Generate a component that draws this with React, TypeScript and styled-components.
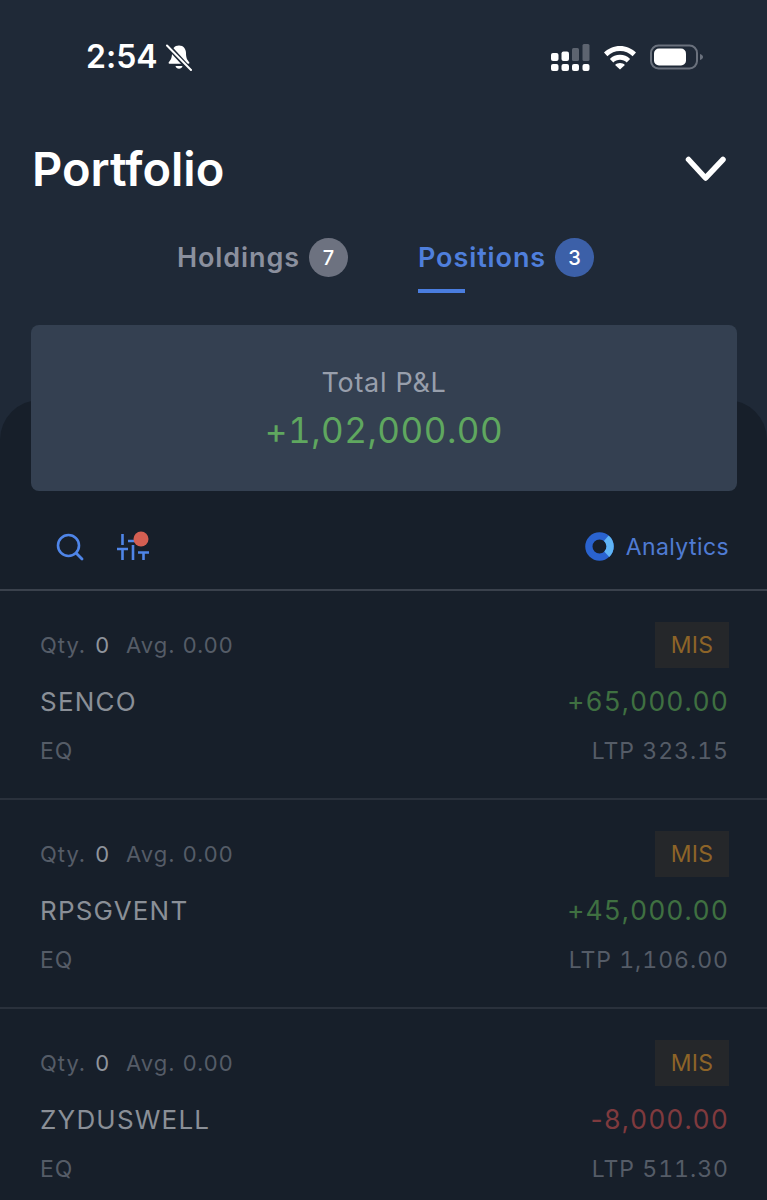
import React from "react";
import styled, { createGlobalStyle } from "styled-components";

const Global = createGlobalStyle`
  html, body { margin: 0; padding: 0; background: #171f2a; }
  body { font-family: Inter, "Liberation Sans", sans-serif; -webkit-font-smoothing: antialiased; font-variant-ligatures: none; font-feature-settings: "calt" 0, "liga" 0; }
`;

const Page = styled.div`
  width: 767px;
  height: 1200px;
  overflow: hidden;
  background: #1f2937;
  display: flow-root;
`;

const StatusBar = styled.div`
  height: 48px;
  padding: 33px 63px 0 86px;
  display: flex;
  justify-content: space-between;
  align-items: center;
`;
const StatusLeft = styled.div`
  display: flex;
  align-items: center;
  gap: 7px;
`;
const Time = styled.span`
  color: #fff;
  font-size: 32px;
  font-weight: 600;
  line-height: 38px;
`;
const StatusRight = styled.div`
  display: flex;
  align-items: center;
  gap: 13px;
`;

const TitleRow = styled.div`
  margin-top: 56px;
  height: 64px;
  padding: 0 40px 0 32px;
  display: flex;
  justify-content: space-between;
  align-items: center;
`;
const Title = styled.h1`
  margin: 0;
  color: #fff;
  font-size: 47px;
  font-weight: 600;
  line-height: 64px;
`;

const Tabs = styled.div`
  margin-top: 37px;
  padding-left: 177px;
  display: flex;
  gap: 70px;
`;
const Tab = styled.div`
  height: 64px;
  display: flex;
  flex-direction: column;
  align-items: flex-start;
`;
const TabHead = styled.div`
  height: 39px;
  display: flex;
  align-items: center;
  gap: 9px;
`;
const TabLabel = styled.span<{ $active?: boolean }>`
  font-size: 27px;
  font-weight: 600;
  letter-spacing: 0.9px;
  color: ${(p) => (p.$active ? "#4f7fdc" : "#8b909e")};
`;
const Count = styled.span<{ $active?: boolean }>`
  width: 39px;
  height: 39px;
  border-radius: 50%;
  display: flex;
  align-items: center;
  justify-content: center;
  color: #fff;
  font-size: 20px;
  font-weight: 500;
  background: ${(p) => (p.$active ? "#3c60a8" : "#6d7280")};
`;
const Underline = styled.div`
  width: 47px;
  height: 4px;
  margin-top: 12px;
  background: #4a7ddf;
`;

const Card = styled.div`
  position: relative;
  z-index: 1;
  margin: 23px 30px 0 31px;
  height: 166px;
  border-radius: 8px;
  background: #344051;
  display: flex;
  flex-direction: column;
  align-items: center;
`;
const CardLabel = styled.div`
  margin-top: 42px;
  color: #989fac;
  font-size: 27px;
  line-height: 32px;
  letter-spacing: 0.7px;
`;
const CardValue = styled.div`
  margin-top: 10px;
  color: #5fa75f;
  font-size: 35px;
  line-height: 42px;
  letter-spacing: 0.5px;
  font-variant-numeric: tabular-nums;
`;

const Sheet = styled.div`
  height: 800px;
  margin-top: -91px;
  padding-top: 91px;
  background: #171f2a;
  border-radius: 40px 40px 0 0;
`;

const Toolbar = styled.div`
  height: 100px;
  padding: 13px 38px 0 56px;
  display: flex;
  align-items: center;
  justify-content: space-between;
  border-bottom: 2px solid #3a414c;
  box-sizing: border-box;
`;
const ToolIcons = styled.div`
  display: flex;
  align-items: center;
  gap: 33px;
`;
const AnalyticsLink = styled.div`
  display: flex;
  align-items: center;
  gap: 12px;
  color: #4f7bd3;
  font-size: 23px;
  letter-spacing: 0.4px;
`;

const Row = styled.div`
  height: 209px;
  box-sizing: border-box;
  padding: 31px 38px 0 40px;
  border-bottom: 2px solid #2a313c;
  display: flex;
  flex-direction: column;
`;
const Line = styled.div<{ $h: number; $mt?: number }>`
  height: ${(p) => p.$h}px;
  margin-top: ${(p) => p.$mt ?? 0}px;
  display: flex;
  align-items: center;
  justify-content: space-between;
`;
const Meta = styled.div`
  display: flex;
  align-items: center;
  gap: 16px;
  color: #555c67;
  font-size: 22px;
  letter-spacing: 1px;
`;
const MetaItem = styled.span`
  display: flex;
  align-items: center;
  gap: 9px;
`;
const Qty = styled.b`
  font-weight: 400;
  color: #8f949c;
`;
const Badge = styled.span`
  width: 74px;
  height: 46px;
  display: flex;
  align-items: center;
  justify-content: center;
  background: #25272a;
  color: #8d6428;
  font-size: 23px;
  letter-spacing: 0.3px;
`;
const Symbol = styled.span`
  color: #8a8f97;
  font-size: 26px;
  letter-spacing: 1.2px;
`;
const Pnl = styled.span<{ $neg?: boolean }>`
  color: ${(p) => (p.$neg ? "#7f3a3e" : "#3f7041")};
  font-size: 26.5px;
  letter-spacing: 1px;
  font-variant-numeric: tabular-nums;
`;
const Sign = styled.span`
  font-variant-numeric: normal;
`;
const Small = styled.span`
  color: #555c67;
  font-size: 23px;
  letter-spacing: 1px;
  font-variant-numeric: tabular-nums;
`;

const BellOff = () => (
  <svg width="28" height="28" viewBox="0 0 28 28" fill="none">
    <path d="M14 2.5c-4.6 0-7 3.6-7 7.6 0 4.8-1 6.6-3.2 9.2-.5.6-.1 1.4.6 1.4h19.2c.7 0 1.1-.8.6-1.4-2.2-2.6-3.2-4.4-3.2-9.2 0-4-2.4-7.6-7-7.6z" fill="#fff" />
    <path d="M10.5 23h7c-.4 1.7-1.8 2.7-3.5 2.7s-3.1-1-3.5-2.7z" fill="#fff" />
    <path d="M3 3l22 24" stroke="#1f2937" strokeWidth="5" />
    <path d="M2 2.5l24 24.5" stroke="#fff" strokeWidth="2" strokeLinecap="round" />
  </svg>
);

const Cellular = () => (
  <svg width="39" height="30" viewBox="0 0 39 30">
    <g fill="#fff">
      <rect x="0" y="11" width="7.5" height="8" rx="2" />
      <rect x="10.5" y="9.5" width="7.5" height="9.5" rx="2" />
      <rect x="0" y="22" width="7.5" height="7" rx="2" />
      <rect x="10.5" y="22" width="7.5" height="7" rx="2" />
      <rect x="21" y="22" width="7" height="7" rx="2" />
      <rect x="31.5" y="22" width="7" height="7" rx="2" />
    </g>
    <rect x="21" y="6" width="7" height="13" rx="1.5" fill="#5d6470" />
    <rect x="31.5" y="2" width="7" height="17" rx="1.5" fill="#5d6470" />
  </svg>
);

const Wifi = () => (
  <svg width="34" height="26" viewBox="0 0 34 26">
    <path d="M17 2C10.8 2 5.4 4.4 1 8.6l3.4 3.6C7.8 8.9 12.2 7 17 7s9.2 1.9 12.6 5.2L33 8.6C28.6 4.4 23.2 2 17 2z" fill="#fff" />
    <path d="M17 10.8c-3.9 0-7.4 1.5-10.1 4.1l3.4 3.5c1.8-1.7 4.1-2.7 6.7-2.7s4.9 1 6.7 2.7l3.4-3.5C24.4 12.3 20.9 10.8 17 10.8z" fill="#fff" />
    <path d="M17 19c-1.9 0-3.6.7-4.9 1.9L17 25.5l4.9-4.6C20.6 19.7 18.9 19 17 19z" fill="#fff" />
  </svg>
);

const Battery = () => (
  <svg width="54" height="26" viewBox="0 0 54 26">
    <rect x="1" y="1.5" width="46" height="23" rx="7.5" fill="none" stroke="#6a717d" strokeWidth="2" />
    <rect x="4" y="4.5" width="32" height="17" rx="5" fill="#fff" />
    <path d="M50 10c1.8.5 3 1.6 3 3s-1.2 2.5-3 3z" fill="#6a717d" />
  </svg>
);

const Chevron = () => (
  <svg width="42" height="28" viewBox="0 0 42 28" fill="none">
    <path d="M3.5 4.5L20.500 23L38 4.500" stroke="#fff" strokeWidth="5.500" strokeLinecap="round" strokeLinejoin="round" />
  </svg>
);

const SearchIcon = () => (
  <svg width="28" height="28" viewBox="0 0 28 28" fill="none">
    <circle cx="12.5" cy="12.5" r="10.5" stroke="#4f85e8" strokeWidth="2.6" />
    <path d="M20.5 20.5l5.5 5.5" stroke="#4f85e8" strokeWidth="2.8" strokeLinecap="round" />
  </svg>
);

const FilterIcon = () => (
  <svg width="33" height="32" viewBox="0 0 33 32" fill="none">
    <g stroke="#4f85e8" strokeWidth="2.6">
      <path d="M5.5 3v11M5.500 18v11M16 14v15M26.500 22v7" />
      <path d="M0 18h11M11 10h10M21 21.500h11" />
    </g>
    <circle cx="24" cy="8" r="7.500" fill="#d45f52" />
  </svg>
);

const AnalyticsIcon = () => (
  <svg width="29" height="29" viewBox="0 0 30 30" fill="none">
    <circle cx="15" cy="15" r="11" stroke="#2a63cf" strokeWidth="7.500" />
    <path d="M22 6.500A11 11 0 0 1 22.500 23" stroke="#5fb4f5" strokeWidth="7.500" />
  </svg>
);

const rows = [
  { name: "SENCO", pnl: "+65,000.00", ltp: "LTP 323.15" },
  { name: "RPSGVENT", pnl: "+45,000.00", ltp: "LTP 1,106.00" },
  { name: "ZYDUSWELL", pnl: "-8,000.00", ltp: "LTP 511.30", neg: true },
];

export default function App() {
  return (
    <Page>
      <Global />
      <StatusBar>
        <StatusLeft>
          <Time>2:54</Time>
          <BellOff />
        </StatusLeft>
        <StatusRight>
          <Cellular />
          <Wifi />
          <Battery />
        </StatusRight>
      </StatusBar>
      <TitleRow>
        <Title>Portfolio</Title>
        <Chevron />
      </TitleRow>
      <Tabs>
        <Tab>
          <TabHead>
            <TabLabel>Holdings</TabLabel>
            <Count>7</Count>
          </TabHead>
        </Tab>
        <Tab>
          <TabHead>
            <TabLabel $active>Positions</TabLabel>
            <Count $active>3</Count>
          </TabHead>
          <Underline />
        </Tab>
      </Tabs>
      <Card>
        <CardLabel>Total P&amp;L</CardLabel>
        <CardValue>+1,02,000.00</CardValue>
      </Card>
      <Sheet>
        <Toolbar>
          <ToolIcons>
            <SearchIcon />
            <FilterIcon />
          </ToolIcons>
          <AnalyticsLink>
            <AnalyticsIcon />
            Analytics
          </AnalyticsLink>
        </Toolbar>
        {rows.map((r) => (
          <Row key={r.name}>
            <Line $h={46}>
              <Meta>
                <MetaItem>
                  Qty. <Qty>0</Qty>
                </MetaItem>
                <span>Avg. 0.00</span>
              </Meta>
              <Badge>MIS</Badge>
            </Line>
            <Line $h={36} $mt={15}>
              <Symbol>{r.name}</Symbol>
              <Pnl $neg={r.neg}>
                <Sign>{r.pnl[0]}</Sign>
                {r.pnl.slice(1)}
              </Pnl>
            </Line>
            <Line $h={32} $mt={16}>
              <Small>EQ</Small>
              <Small>{r.ltp}</Small>
            </Line>
          </Row>
        ))}
      </Sheet>
    </Page>
  );
}
